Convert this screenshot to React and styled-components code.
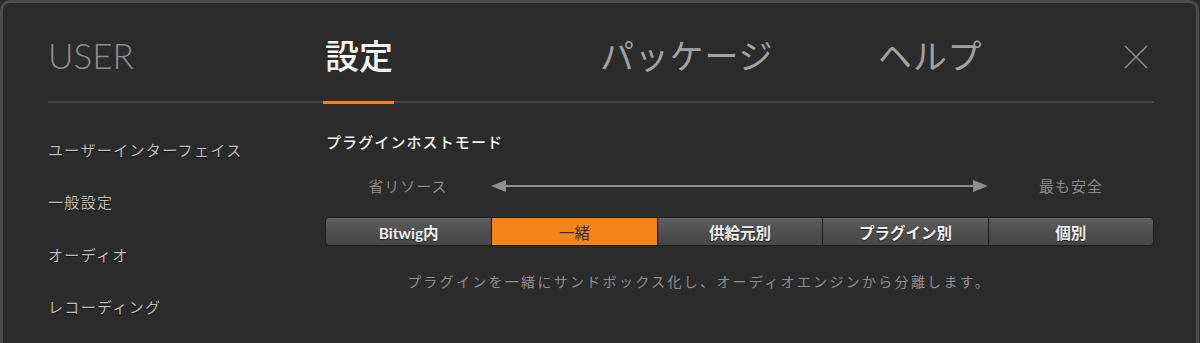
import React, { useState } from 'react';
import styled, { createGlobalStyle } from 'styled-components';

const GlobalStyle = createGlobalStyle`
  html, body {
    margin: 0;
    padding: 0;
    background: #2b2b2b;
    overflow: hidden;
  }
  body {
    font-family: 'Lato', 'Noto Sans CJK JP', sans-serif;
  }
`;

const Window = styled.div`
  box-sizing: border-box;
  width: 1199px;
  height: 380px;
  border: 3px solid #4c4c4c;
  border-radius: 10px;
  background: #2b2b2b;
  padding: 0 42px 0 45px;
`;

const Header = styled.div`
  display: flex;
  align-items: center;
  height: 100px;
  padding-top: 6px;
  box-sizing: border-box;
  border-bottom: 2px solid #464646;
`;

const TabSlot = styled.div`
  width: ${(p) => p.width}px;
  flex: none;
  display: flex;
  align-items: center;
`;

const Tab = styled.div`
  position: relative;
  font-family: ${(p) => (p.latin ? "'Lato', sans-serif" : "'Noto Sans CJK JP', sans-serif")};
  font-size: ${(p) => (p.latin ? '35px' : '34px')};
  font-weight: ${(p) => (p.latin ? 300 : p.active ? 500 : 400)};
  letter-spacing: ${(p) => (p.latin || p.active ? '0' : '0.8px')};
  color: ${(p) => (p.active ? '#f4f4f4' : p.latin ? '#8e8e8e' : '#a2a2a2')};
  line-height: 40px;
  cursor: pointer;

  &::after {
    content: '';
    display: ${(p) => (p.active ? 'block' : 'none')};
    position: absolute;
    left: -2px;
    right: -1px;
    bottom: -29px;
    height: 3px;
    background: #f5821f;
  }
`;

const CloseButton = styled.button`
  margin-left: auto;
  margin-right: 6px;
  margin-top: 4px;
  width: 24px;
  height: 24px;
  padding: 0;
  border: none;
  background: none;
  cursor: pointer;
  color: #8c8c8c;
`;

const Body = styled.div`
  display: flex;
`;

const Sidebar = styled.ul`
  list-style: none;
  margin: 0;
  padding: 20px 0 0;
  width: 277px;
  flex: none;
`;

const SideItem = styled.li`
  height: 52.5px;
  display: flex;
  align-items: center;
  font-family: 'Noto Sans CJK JP', sans-serif;
  font-size: 15px;
  letter-spacing: 1.35px;
  color: #bdbdbd;
  text-shadow: 0 1px 1px #111;
`;

const Content = styled.div`
  flex: 1;
  padding-top: 29px;
`;

const Heading = styled.div`
  font-family: 'Noto Sans CJK JP', sans-serif;
  font-size: 15px;
  font-weight: 500;
  letter-spacing: 1.1px;
  line-height: 20px;
  color: #f2f2f2;
  padding-left: 1px;
`;

const Scale = styled.div`
  display: grid;
  grid-template-columns: repeat(5, 1fr);
  align-items: center;
  height: 20px;
  margin-top: 23px;
`;

const ScaleLabel = styled.div`
  text-align: center;
  font-family: 'Noto Sans CJK JP', sans-serif;
  font-size: 15px;
  letter-spacing: 1px;
  color: #8a8a8a;
`;

const Arrow = styled.div`
  grid-column: 2 / span 3;
  display: flex;
  align-items: center;
  color: #8e8e8e;
`;

const ArrowLine = styled.div`
  flex: 1;
  height: 2px;
  background: currentColor;
`;

const Segments = styled.div`
  display: grid;
  grid-template-columns: repeat(5, 1fr);
  height: 29px;
  margin-top: 22px;
  border: 1px solid #1c1c1c;
  border-radius: 5px;
  overflow: hidden;
  box-sizing: border-box;
`;

const Segment = styled.button`
  border: none;
  border-left: ${(p) => (p.first ? 'none' : '1px solid #1c1c1c')};
  padding: 0;
  margin: 0;
  font-family: 'Lato', 'Noto Sans CJK JP', sans-serif;
  font-size: 15.5px;
  font-weight: ${(p) => (p.selected ? 400 : 700)};
  color: ${(p) => (p.selected ? '#2e2e2e' : '#f0f0f0')};
  text-shadow: ${(p) => (p.selected ? 'none' : '0 1px 1px #222')};
  background: ${(p) =>
    p.selected ? '#f5851a' : 'linear-gradient(#5e5e5e, #4f4f4f 50%, #464646)'};
  box-shadow: ${(p) => (p.selected ? 'none' : 'inset 0 1px 0 #6a6a6a')};
  cursor: pointer;
`;

const Description = styled.div`
  margin-top: 25px;
  padding-left: 82px;
  font-family: 'Noto Sans CJK JP', sans-serif;
  font-size: 14px;
  letter-spacing: 2.3px;
  line-height: 20px;
  color: #8e8e8e;
`;

const tabs = [
  { label: 'USER', latin: true, width: 277 },
  { label: '設定', width: 275 },
  { label: 'パッケージ', width: 278 },
  { label: 'ヘルプ', width: 200 },
];

const sideItems = ['ユーザーインターフェイス', '一般設定', 'オーディオ', 'レコーディング'];

const modes = ['Bitwig内', '一緒', '供給元別', 'プラグイン別', '個別'];

const ArrowHead = ({ dir }) => (
  <svg width="15" height="12" viewBox="0 0 15 12">
    {dir === 'left' ? (
      <polygon points="0,6 15,0 15,12" fill="currentColor" />
    ) : (
      <polygon points="15,6 0,0 0,12" fill="currentColor" />
    )}
  </svg>
);

const App = () => {
  const [mode, setMode] = useState(1);

  return (
    <>
      <GlobalStyle />
      <Window>
        <Header>
          {tabs.map((t) => (
            <TabSlot key={t.label} width={t.width}>
              <Tab latin={t.latin} active={t.label === '設定'}>
                {t.label}
              </Tab>
            </TabSlot>
          ))}
          <CloseButton aria-label="close">
            <svg width="24" height="24" viewBox="0 0 24 24">
              <path d="M1 1 L23 23 M23 1 L1 23" stroke="currentColor" strokeWidth="1.6" fill="none" />
            </svg>
          </CloseButton>
        </Header>
        <Body>
          <Sidebar>
            {sideItems.map((s) => (
              <SideItem key={s}>{s}</SideItem>
            ))}
          </Sidebar>
          <Content>
            <Heading>プラグインホストモード</Heading>
            <Scale>
              <ScaleLabel>省リソース</ScaleLabel>
              <Arrow>
                <ArrowHead dir="left" />
                <ArrowLine />
                <ArrowHead dir="right" />
              </Arrow>
              <ScaleLabel>最も安全</ScaleLabel>
            </Scale>
            <Segments>
              {modes.map((m, i) => (
                <Segment key={m} first={i === 0} selected={i === mode} onClick={() => setMode(i)}>
                  {m}
                </Segment>
              ))}
            </Segments>
            <Description>プラグインを一緒にサンドボックス化し、オーディオエンジンから分離します。</Description>
          </Content>
        </Body>
      </Window>
    </>
  );
};

export default App;
